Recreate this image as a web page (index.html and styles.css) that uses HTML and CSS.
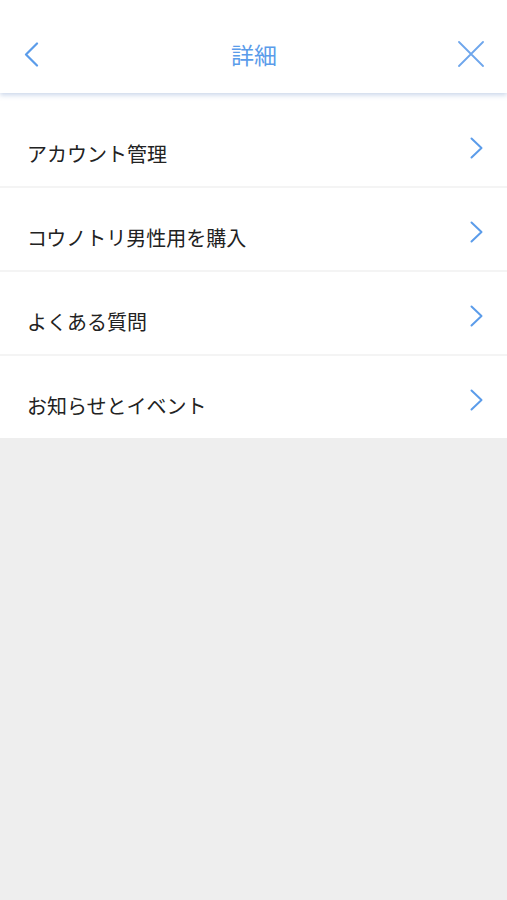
FILE: index.html
```html
<!DOCTYPE html>
<html lang="ja">
<head>
<meta charset="utf-8">
<title>詳細</title>
<link rel="stylesheet" href="styles.css">
</head>
<body>
<header class="topbar">
  <button class="icon-btn back" aria-label="戻る">
    <svg width="15" height="25" viewBox="0 0 15 25"><path d="M13 1.5 L2 12.5 L13 23.5" fill="none" stroke="#5b9cea" stroke-width="2.2" stroke-linecap="round" stroke-linejoin="round"/></svg>
  </button>
  <h1 class="title">詳細</h1>
  <button class="icon-btn close" aria-label="閉じる">
    <svg width="26" height="26" viewBox="0 0 26 26"><path d="M1 1 L25 25 M25 1 L1 25" fill="none" stroke="#6ea6ec" stroke-width="1.8" stroke-linecap="round"/></svg>
  </button>
</header>
<ul class="menu">
  <li class="row"><span class="label">アカウント管理</span><svg class="chev" width="13" height="22" viewBox="0 0 13 22"><path d="M1.5 1.5 L11.5 11 L1.5 20.5" fill="none" stroke="#5b9cea" stroke-width="2" stroke-linecap="round" stroke-linejoin="round"/></svg></li>
  <li class="row"><span class="label">コウノトリ男性用を購入</span><svg class="chev" width="13" height="22" viewBox="0 0 13 22"><path d="M1.5 1.5 L11.5 11 L1.5 20.5" fill="none" stroke="#5b9cea" stroke-width="2" stroke-linecap="round" stroke-linejoin="round"/></svg></li>
  <li class="row"><span class="label">よくある質問</span><svg class="chev" width="13" height="22" viewBox="0 0 13 22"><path d="M1.5 1.5 L11.5 11 L1.5 20.5" fill="none" stroke="#5b9cea" stroke-width="2" stroke-linecap="round" stroke-linejoin="round"/></svg></li>
  <li class="row"><span class="label">お知らせとイベント</span><svg class="chev" width="13" height="22" viewBox="0 0 13 22"><path d="M1.5 1.5 L11.5 11 L1.5 20.5" fill="none" stroke="#5b9cea" stroke-width="2" stroke-linecap="round" stroke-linejoin="round"/></svg></li>
</ul>
</body>
</html>
```
FILE: styles.css
```css
html, body {
  margin: 0;
  padding: 0;
}
body {
  background: #eeeeee;
  font-family: "Noto Sans CJK JP", "Noto Sans", sans-serif;
  min-height: 900px;
}
.topbar {
  position: relative;
  z-index: 1;
  height: 93px;
  box-sizing: border-box;
  padding: 15px 23px 0 24px;
  background: #ffffff;
  display: grid;
  grid-template-columns: 1fr auto 1fr;
  align-items: center;
  box-shadow: 0 2px 5px rgba(120, 150, 200, 0.4);
}
.icon-btn {
  border: 0;
  background: none;
  padding: 0;
  margin: 0;
  display: flex;
  align-items: center;
}
.close {
  justify-self: end;
}
.title {
  margin: 0;
  font-size: 23px;
  font-weight: 400;
  color: #5b9cea;
}
.menu {
  list-style: none;
  margin: 0;
  padding: 11px 0 0;
  background: #ffffff;
}
.row {
  height: 84px;
  box-sizing: border-box;
  padding: 17px 24px 0 27px;
  display: flex;
  align-items: center;
  justify-content: space-between;
  border-bottom: 2px solid #f4f4f4;
}
.row:last-child {
  height: 82px;
  border-bottom: 0;
}
.label {
  font-size: 20px;
  color: #222222;
}
.chev {
  margin-bottom: 12px;
}
```
